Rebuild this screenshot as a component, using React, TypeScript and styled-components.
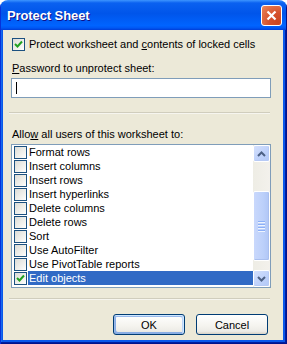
import styled, { createGlobalStyle } from "styled-components"

const GlobalStyle = createGlobalStyle`
    body {
        margin: 0;
        background: #ffffff;
        font-family: "Liberation Sans", Arial, sans-serif;
    }
`

const items = [
    { label: "Format rows", checked: false },
    { label: "Insert columns", checked: false },
    { label: "Insert rows", checked: false },
    { label: "Insert hyperlinks", checked: false },
    { label: "Delete columns", checked: false },
    { label: "Delete rows", checked: false },
    { label: "Sort", checked: false },
    { label: "Use AutoFilter", checked: false },
    { label: "Use PivotTable reports", checked: false },
    { label: "Edit objects", checked: true, selected: true },
]

const Tick = () => (
    <svg width="9" height="9" viewBox="0 0 9 9">
        <path d="M1 4 L3.5 6.5 L8 1.5" fill="none" stroke="#21a121" strokeWidth="2" />
    </svg>
)

const Arrow = ({ up }: { up?: boolean }) => (
    <svg width="9" height="6" viewBox="0 0 9 6">
        <path
            d={up ? "M1 5 L4.5 1.5 L8 5" : "M1 1 L4.5 4.5 L8 1"}
            fill="none"
            stroke="#4d6185"
            strokeWidth="2"
        />
    </svg>
)

const App = () => {
    return (
        <>
            <GlobalStyle />
            <Window>
                <TitleBar>
                    <Title>Protect Sheet</Title>
                    <CloseButton>
                        <svg width="11" height="11" viewBox="0 0 11 11">
                            <path d="M1.5 1.5 L9.5 9.5 M9.5 1.5 L1.5 9.5" stroke="#fff" strokeWidth="2.2" />
                        </svg>
                    </CloseButton>
                </TitleBar>

                <Frame>
                    <Panel>
                        <CheckRow>
                            <Check $checked><Tick /></Check>
                            <Text>Protect worksheet and <u>c</u>ontents of locked cells</Text>
                        </CheckRow>

                        <Label><u>P</u>assword to unprotect sheet:</Label>
                        <PasswordBox>
                            <Caret />
                        </PasswordBox>

                        <Separator $top={14} />

                        <Label $top={14}>Allo<u>w</u> all users of this worksheet to:</Label>

                        <ListBox>
                            <Items>
                                {items.map((item) => (
                                    <Row key={item.label}>
                                        <Check $checked={item.checked}>{item.checked && <Tick />}</Check>
                                        <ItemLabel $selected={item.selected}>{item.label}</ItemLabel>
                                    </Row>
                                ))}
                            </Items>
                            <ScrollBar>
                                <ScrollButton><Arrow up /></ScrollButton>
                                <Track>
                                    <Thumb>
                                        <Grip />
                                        <Grip />
                                        <Grip />
                                        <Grip />
                                    </Thumb>
                                </Track>
                                <ScrollButton><Arrow /></ScrollButton>
                            </ScrollBar>
                        </ListBox>

                        <Separator $top={10} />

                        <Buttons>
                            <Button $default>OK</Button>
                            <Button>Cancel</Button>
                        </Buttons>
                    </Panel>
                </Frame>
            </Window>
        </>
    )
}

const Window = styled.div`
    width: 287px;
    height: 344px;
    display: flex;
    flex-direction: column;
    border-radius: 8px 8px 0 0;
    overflow: hidden;
    font-family: "Liberation Sans", Arial, sans-serif;
    font-size: 11px;
    color: #000;
`

const TitleBar = styled.div`
    height: 30px;
    flex-shrink: 0;
    display: flex;
    align-items: center;
    justify-content: space-between;
    padding: 0 5px 0 7px;
    background: linear-gradient(180deg, #3d95ff 0%, #0a61f0 10%, #0055ea 45%, #0064ff 85%, #0058f4 93%, #003dd7 100%);
    box-shadow: inset 1px 0 #0831d9, inset -1px 0 #00138c;
`

const Title = styled.span`
    font-size: 13px;
    font-weight: bold;
    color: #fff;
    text-shadow: 1px 1px #0f1089;
    letter-spacing: -0.1px;
`

const CloseButton = styled.div`
    width: 21px;
    height: 21px;
    box-sizing: border-box;
    border: 1px solid #fff;
    border-radius: 3px;
    display: flex;
    align-items: center;
    justify-content: center;
    background: radial-gradient(circle at 85% 85%, #cc4620 0%, #d5512c 40%, #e5794f 85%, #f08c63 100%);
    margin-top: 1px;
`

const Frame = styled.div`
    flex: 1;
    display: flex;
    padding: 0 4px 4px 3px;
    background: #0a58ea;
    box-shadow: inset 1px 0 #0831d9, inset -1px -1px #00138c, inset -2px -2px #001ea0, inset 2px 0 #166aee;
`

const Panel = styled.div`
    flex: 1;
    display: flex;
    flex-direction: column;
    background: #ece9d8;
    padding: 0 12px 0 8px;
`

const CheckRow = styled.div`
    display: flex;
    align-items: center;
    height: 13px;
    margin: 8px 0 0 1px;
    gap: 4px;
`

const Check = styled.span<{ $checked?: boolean }>`
    width: 13px;
    height: 13px;
    box-sizing: border-box;
    flex-shrink: 0;
    border: 1px solid #1c5180;
    background: linear-gradient(135deg, #dcdcd7 0%, #f4f4f0 70%, #ffffff 100%);
    display: flex;
    align-items: center;
    justify-content: center;
`

const Text = styled.span`
    line-height: 13px;
    white-space: nowrap;
`

const Label = styled.div<{ $top?: number }>`
    line-height: 13px;
    margin-top: ${(p) => p.$top ?? 11}px;
    margin-left: 1px;
`

const PasswordBox = styled.div`
    height: 20px;
    box-sizing: border-box;
    margin-top: 3px;
    border: 1px solid #7f9db9;
    background: #fff;
    display: flex;
    align-items: center;
    padding-left: 4px;
`

const Caret = styled.span`
    width: 1px;
    height: 12px;
    background: #000;
`

const Separator = styled.div<{ $top: number }>`
    height: 1px;
    margin: ${(p) => p.$top}px 1px 0 -2px;
    background: #d0cdbd;
    border-bottom: 1px solid #f6f5ef;
`

const ListBox = styled.div`
    height: 144px;
    box-sizing: border-box;
    margin-top: 3px;
    border: 1px solid #7f9db9;
    background: #fff;
    display: flex;
`

const Items = styled.div`
    flex: 1;
    display: flex;
    flex-direction: column;
    padding: 0 0 0 2px;
`

const Row = styled.div`
    height: 14px;
    display: flex;
    align-items: center;
`

const ItemLabel = styled.span<{ $selected?: boolean }>`
    flex: 1;
    height: 14px;
    line-height: 14px;
    margin-left: 1px;
    padding-left: 1px;
    white-space: nowrap;
    background: ${(p) => (p.$selected ? "#316ac5" : "transparent")};
    color: ${(p) => (p.$selected ? "#fff" : "#000")};
`

const ScrollBar = styled.div`
    width: 17px;
    display: flex;
    flex-direction: column;
    background: linear-gradient(90deg, #eeede5, #f3f1ec);
`

const ScrollButton = styled.div`
    width: 17px;
    height: 17px;
    box-sizing: border-box;
    border: 1px solid #fff;
    border-radius: 2px;
    background: linear-gradient(135deg, #d4e0fc 0%, #c1d3fb 50%, #b2c8f7 100%);
    box-shadow: inset -1px -1px #b7caf5;
    display: flex;
    align-items: center;
    justify-content: center;
`

const Track = styled.div`
    flex: 1;
    display: flex;
    flex-direction: column;
    padding-top: 29px;
`

const Thumb = styled.div`
    height: 70px;
    box-sizing: border-box;
    border: 1px solid #fff;
    border-radius: 2px;
    background: linear-gradient(90deg, #c9d8fc 0%, #bcd0fa 60%, #b0c6f6 100%);
    box-shadow: inset -1px -1px #a9bfef;
    display: flex;
    flex-direction: column;
    align-items: center;
    justify-content: center;
    gap: 1px;
`

const Grip = styled.span`
    width: 7px;
    height: 1px;
    background: #8cb0f8;
    border-bottom: 1px solid #eef4fe;
`

const Buttons = styled.div`
    display: flex;
    justify-content: flex-end;
    gap: 11px;
    margin: 14px 3px 0 0;
`

const Button = styled.div<{ $default?: boolean }>`
    width: 72px;
    height: 21px;
    box-sizing: border-box;
    border: 1px solid #003c74;
    border-radius: 3px;
    display: flex;
    align-items: center;
    justify-content: center;
    background: linear-gradient(180deg, #ffffff 0%, #f4f3ee 60%, #ecebe6 86%, #d6d0c5 100%);
    box-shadow: ${(p) =>
        p.$default
            ? "inset -1px 1px #cee7ff, inset 1px 2px #98b8ea, inset -2px 2px #bcd4f6, inset 1px -1px #89ade4, inset 2px -2px #89ade4"
            : "none"};
`

export default App
